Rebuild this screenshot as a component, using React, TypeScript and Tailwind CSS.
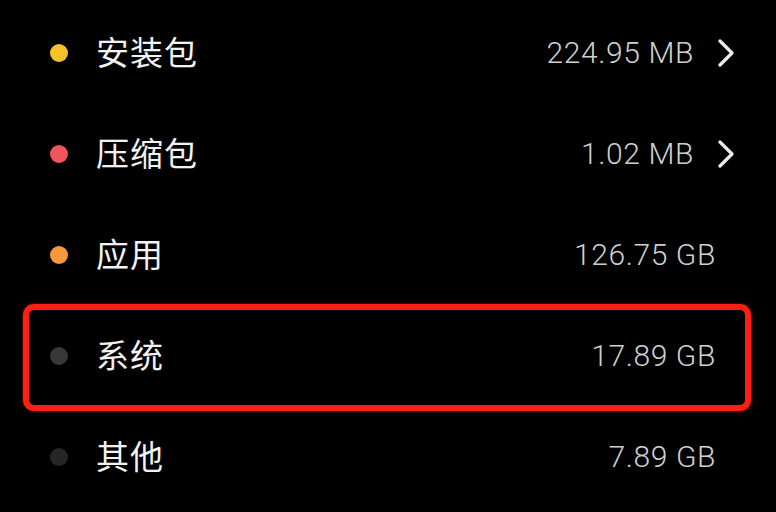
import React from "react";

type Row = { label: string; value: string; dot: string; chevron: boolean; highlight?: boolean };

const rows: Row[] = [
  { label: "安装包", value: "224.95 MB", dot: "bg-[#f6c12a]", chevron: true },
  { label: "压缩包", value: "1.02 MB", dot: "bg-[#f2545b]", chevron: true },
  { label: "应用", value: "126.75 GB", dot: "bg-[#f8983a]", chevron: false },
  { label: "系统", value: "17.89 GB", dot: "bg-[#383838]", chevron: false, highlight: true },
  { label: "其他", value: "7.89 GB", dot: "bg-[#262626]", chevron: false },
];

function Chevron() {
  return (
    <svg width="18" height="28" viewBox="0 0 18 28" className="ml-[23px] mr-[41px] shrink-0">
      <path d="M3 2 L15 14 L3 26" fill="none" stroke="#ececec" strokeWidth="3.2" strokeLinecap="round" strokeLinejoin="round" />
    </svg>
  );
}

export default function App() {
  return (
    <div className="w-[776px] h-[512px] bg-black overflow-hidden pt-[2px]" style={{ fontFamily: '"Noto Sans CJK SC", Roboto, sans-serif' }}>
      {rows.map((r) => (
        <div key={r.label} className="relative h-[101px] flex items-center">
          {r.highlight && (
            <div className="absolute left-[23px] top-[-1px] w-[728px] h-[107px] border-[6px] border-[#ff1e12] rounded-[11px] shadow-[0_0_3px_rgba(255,40,20,0.6)]" />
          )}
          <div className={`ml-[50px] w-[18px] h-[18px] rounded-full shrink-0 ${r.dot}`} />
          <div className="ml-[28px] mt-[-2px] text-[33px] leading-none text-[#f2f2f2] font-normal tracking-[1px]">{r.label}</div>
          <div className="flex-1" />
          <div
            className={`text-[30px] leading-none text-[#cfcfcf] font-light tracking-[0.6px] ${r.chevron ? "" : "mr-[60px]"}`}
            style={{ fontFamily: 'Roboto, "Noto Sans", sans-serif' }}
          >
            {r.value}
          </div>
          {r.chevron && <Chevron />}
        </div>
      ))}
    </div>
  );
}
